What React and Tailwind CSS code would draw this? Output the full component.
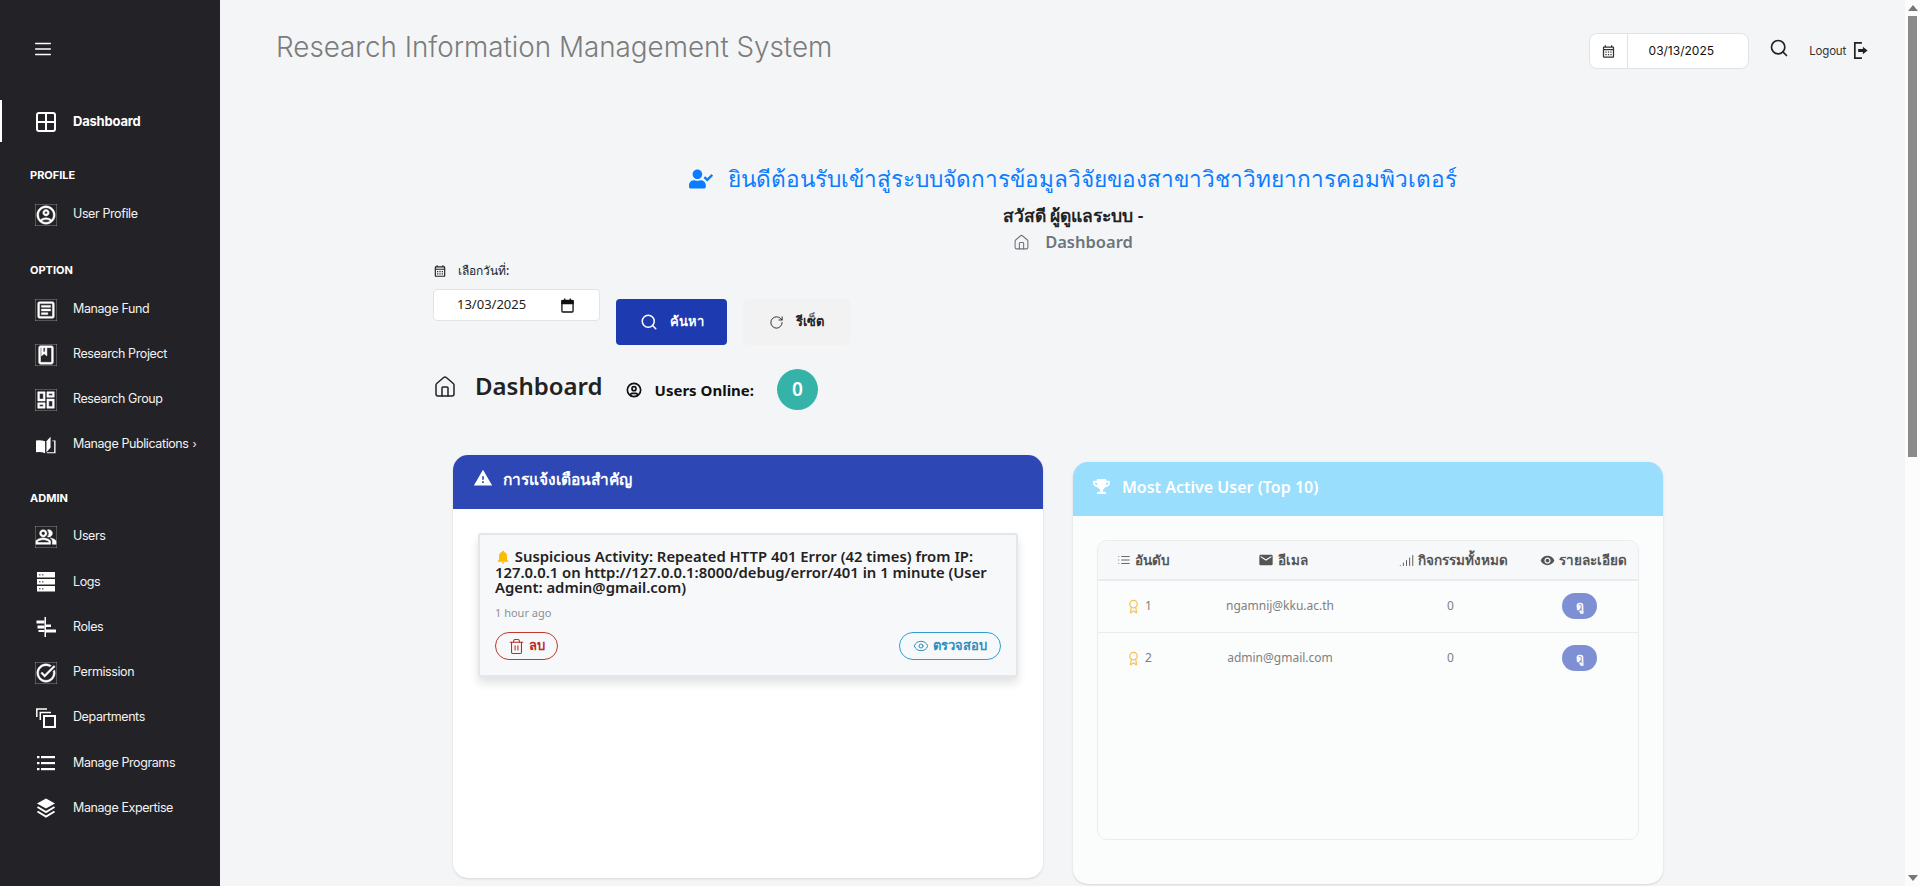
import {
  MdOutlineAccountCircle,
  MdOutlineArticle,
  MdOutlineBook,
  MdOutlineDashboard,
  MdOutlinePeopleAlt,
  MdOutlineTaskAlt,
  MdOutlineCalendarMonth,
  MdEmail,
  MdRemoveRedEye,
  MdNotifications,
  MdWarning,
} from 'react-icons/md'
import { FaTrophy, FaUserCheck } from 'react-icons/fa'
import { LuMenu, LuSearch, LuRotateCw, LuHouse, LuEye, LuTrash2, LuAward, LuList, LuSignal, LuCircleUser } from 'react-icons/lu'

const sans = "font-['Inter','Noto_Sans',sans-serif]"

// material icons sit heavier and larger in the picture
const thick = (Icon) => () => <Icon className="size-[22px] shrink-0 text-white [stroke-width:0.5px]" />

// Sidebar icons the packages don't have in this shape
const BookIcon = ({ className }) => (
  <svg viewBox="0 0 22 20" className={className} fill="currentColor">
    <path d="M0 5Q5 4 10 6V19Q5 17 0 18Z" />
    <path d="M11.5 6L16 1V13L11.5 18Z" />
    <path d="M18 5H21.5V19H12V18H20V6H18Z" />
  </svg>
)

const LogsIcon = ({ className }) => (
  <svg viewBox="0 0 20 20" className={className}>
    {[0, 7, 14].map((y) => (
      <g key={y}>
        <rect x="1" y={y} width="18" height="5.5" fill="currentColor" />
        <rect x="3" y={y + 2} width="1.5" height="1.5" fill="#777" />
        <rect x="6" y={y + 2} width="1.5" height="1.5" fill="#777" />
      </g>
    ))}
  </svg>
)

const RolesIcon = ({ className }) => (
  <svg viewBox="0 0 20 20" className={className} fill="currentColor">
    <rect x="8.5" y="0" width="1.5" height="20" />
    <rect x="0.5" y="3.5" width="8" height="3" />
    <rect x="1.5" y="8.5" width="7" height="3" />
    <rect x="2.5" y="13" width="6" height="2" />
    <rect x="10" y="7.5" width="5" height="2.5" />
    <rect x="10" y="12.5" width="10" height="3" />
  </svg>
)

const DepartmentsIcon = ({ className }) => (
  <svg viewBox="0 0 20 20" className={className} fill="none" stroke="currentColor">
    <path d="M0.8 9V1H11" strokeWidth="1.5" />
    <path d="M4.3 12V4.5H15" strokeWidth="1.5" />
    <rect x="8" y="8" width="11" height="11" strokeWidth="2" />
  </svg>
)

const ListIcon = ({ className }) => (
  <svg viewBox="0 0 20 20" className={className} fill="currentColor">
    {[3, 9, 15].map((y) => (
      <g key={y}>
        <rect x="1" y={y} width="2.5" height="2.2" />
        <rect x="5" y={y} width="14" height="2.2" />
      </g>
    ))}
  </svg>
)

const LayersIcon = ({ className }) => (
  <svg viewBox="0 0 20 20" className={className} fill="none" stroke="currentColor" strokeWidth="2">
    <path d="M10 0.5L19 5.5L10 10.5L1 5.5Z" fill="currentColor" stroke="none" />
    <path d="M1.5 9L10 14L18.5 9" />
    <path d="M1.5 13.5L10 18.5L18.5 13.5" />
  </svg>
)

const LogoutIcon = ({ className }) => (
  <svg viewBox="0 0 15 18" className={className} fill="none" stroke="currentColor" strokeWidth="1.8">
    <path d="M9 1H1.5V17H9" />
    <path d="M5 7.5H10V5L15 9L10 13V10.5H5Z" fill="currentColor" stroke="none" />
  </svg>
)

const DateIcon = ({ className }) => (
  <svg viewBox="0 0 14 16" className={className} fill="none" stroke="currentColor" strokeWidth="1.4">
    <rect x="1" y="2.5" width="12" height="12.5" rx="1" />
    <path d="M1 3H13V6H1Z" fill="currentColor" />
    <path d="M4 0.5V3M10 0.5V3" />
  </svg>
)

const option = [
  ['Manage Fund', thick(MdOutlineArticle)],
  ['Research Project', thick(MdOutlineBook)],
  ['Research Group', thick(MdOutlineDashboard)],
  ['Manage Publications', BookIcon, true],
]

const admin = [
  ['Users', thick(MdOutlinePeopleAlt)],
  ['Logs', LogsIcon],
  ['Roles', RolesIcon],
  ['Permission', thick(MdOutlineTaskAlt)],
  ['Departments', DepartmentsIcon],
  ['Manage Programs', ListIcon],
  ['Manage Expertise', LayersIcon],
]

const users = ['ngamnij@kku.ac.th', 'admin@gmail.com']

const ProfileIcon = thick(MdOutlineAccountCircle)

const NavItem = ({ label, Icon, more, rowClass = 'h-[45px]' }) => (
  <div className={`flex items-center pl-[36px] text-[12.5px] tracking-[-0.4px] text-[#f2f2f2] ${rowClass}`}>
    <div className="flex w-5 justify-center">
      <Icon className="size-5 shrink-0 text-white" />
    </div>
    <span className="ml-[17px]">{label}</span>
    {more && <span className="ml-1 text-[11px]">›</span>}
  </div>
)

const SectionLabel = ({ children, className }) => (
  <div className={`h-4 pl-[30px] text-[11px] leading-4 font-bold text-white ${className}`}>{children}</div>
)

const Sidebar = () => (
  <aside className={`flex h-full w-[220px] shrink-0 flex-col bg-[#232227] ${sans}`}>
    <div className="flex h-[100px] items-start pt-[38px] pl-[32px]">
      <LuMenu className="size-[22px] text-white" strokeWidth={1.5} />
    </div>
    <div className="flex h-[42px] items-center border-l-2 border-white pl-[34px] pt-[1px] text-[13px] font-bold tracking-[-0.2px] text-white">
      <svg viewBox="0 0 20 20" className="size-5" fill="none" stroke="currentColor" strokeWidth="2">
        <rect x="1" y="1" width="18" height="18" rx="2" />
        <path d="M10 1v18M1 10h18" />
      </svg>
      <span className="ml-[17px]">Dashboard</span>
    </div>
    <SectionLabel className="mt-[25px] mb-[9px]">PROFILE</SectionLabel>
    <NavItem label="User Profile" Icon={ProfileIcon} />
    <SectionLabel className="mt-[25px] mb-[9px]">OPTION</SectionLabel>
    {option.map(([label, Icon, more]) => (
      <NavItem key={label} label={label} Icon={Icon} more={more} />
    ))}
    <SectionLabel className="mt-[23px] mb-[8px]">ADMIN</SectionLabel>
    {admin.map(([label, Icon]) => (
      <NavItem key={label} label={label} Icon={Icon} rowClass="h-[45.3px]" />
    ))}
  </aside>
)

const Topbar = () => (
  <header className="flex h-[94px] items-start justify-between pl-[56px] pr-[37px]">
    <h1 className={`mt-[28px] text-[27.8px] leading-[38px] font-light text-[#7c7c7c] ${sans}`}>
      Research Information Management System
    </h1>
    <div className="mt-[33px] flex items-start">
      <div className="flex h-[36px] w-[160px] items-center rounded-lg border border-[#dfe2e6] bg-white">
        <div className="flex h-full w-[38px] items-center justify-center border-r border-[#dfe2e6]">
          <MdOutlineCalendarMonth className="size-[15px] text-[#333]" />
        </div>
        <span className={`flex-1 pr-[14px] text-center text-[12px] text-[#111] ${sans}`}>03/13/2025</span>
      </div>
      <LuSearch className="mt-[5px] ml-[20px] size-[20px] text-[#222]" />
      <span className={`mt-[10px] ml-[20px] text-[11.5px] tracking-[-0.2px] text-[#333] ${sans}`}>Logout</span>
      <LogoutIcon className="mt-[9px] ml-[7px] h-[17px] w-[15px] text-[#222]" />
    </div>
  </header>
)

const AlertsCard = () => (
  <section className="h-[423px] w-[590px] overflow-hidden rounded-[15px] bg-white shadow-sm">
    <div className="flex h-[54px] items-start bg-[#2d47b5] pt-[13px] pl-5 text-white">
      <MdWarning className="size-[20px]" />
      <span className="ml-[10px] text-[15.5px] font-semibold">การแจ้งเตือนสำคัญ</span>
    </div>
    <div className="px-[25px] pt-[24px]">
      <div className="h-[144px] rounded-[3px] border-2 border-[#e3e6ea] bg-[#f7f8fa] px-[15px] pt-[14px] shadow-[0_6px_10px_rgba(0,0,0,0.12)]">
        <p className="text-[14.85px] leading-[15px] font-semibold text-[#222]">
          <MdNotifications className="inline size-[16px] align-[-3px] text-[#fbbc05]" /> Suspicious Activity: Repeated HTTP 401 Error (42 times) from IP: 127.0.0.1 on http://127.0.0.1:8000/debug/error/401 in 1 minute (User Agent: admin@gmail.com)
        </p>
        <p className="mt-[10px] text-[11px] leading-[15px] text-[#8b9096]">1 hour ago</p>
        <div className="mt-[12px] flex justify-between">
          <button className="flex h-[28px] w-[63px] items-center justify-center gap-1 rounded-full border border-[#c0392b] text-[13px] font-semibold text-[#b92c28]">
            <LuTrash2 className="size-[17px]" strokeWidth={1.5} />
            ลบ
          </button>
          <button className="flex h-[28px] w-[102px] items-center justify-center gap-1 rounded-full border border-[#2f9fd0] text-[13px] font-semibold text-[#2f8fbd]">
            <LuEye className="size-[16px]" strokeWidth={1.5} />
            ตรวจสอบ
          </button>
        </div>
      </div>
    </div>
  </section>
)

const ActiveUsersCard = () => (
  <section className="mt-[7px] h-[422px] w-[590px] overflow-hidden rounded-[15px] bg-[#fbfcfc] shadow-sm">
    <div className="flex h-[54px] items-start bg-[#99defc] pt-[13px] pl-5 text-white">
      <FaTrophy className="mt-[3px] size-[17px]" />
      <span className="ml-[12px] text-[16px] font-semibold">Most Active User (Top 10)</span>
    </div>
    <div className="px-[24px] pt-[24px]">
      <div className="h-[300px] overflow-hidden rounded-[10px] border border-[#e9ecef]">
        <div className="grid h-[40px] grid-cols-[90px_190px_150px_1fr] items-center border-b-2 border-[#e9ecef] bg-[#f7f8f9] text-center text-[13.5px] font-semibold text-[#555]">
          <span className="flex items-center justify-center gap-1"><LuList className="size-[14px]" strokeWidth={1.5} />อันดับ</span>
          <span className="flex items-center justify-center gap-1"><MdEmail className="size-[16px]" />อีเมล</span>
          <span className="flex items-center justify-center gap-1"><LuSignal className="size-[15px]" strokeWidth={1.5} />กิจกรรมทั้งหมด</span>
          <span className="flex items-center justify-center gap-1"><MdRemoveRedEye className="size-[15px]" />รายละเอียด</span>
        </div>
        {users.map((email, i) => (
          <div key={email} className="grid h-[51.5px] grid-cols-[82px_200px_141px_117px] items-center border-b border-[#e9ecef] text-center text-[12px] text-[#808080] last:border-b-0">
            <span className="flex items-center justify-center gap-1">
              <LuAward className="size-[15px] text-[#f6c35b]" />
              {i + 1}
            </span>
            <span>{email}</span>
            <span>0</span>
            <span className="flex justify-center">
              <button className="h-[26px] w-[35px] rounded-full bg-[#7e8fd3] text-[12px] font-semibold text-white">ดู</button>
            </span>
          </div>
        ))}
      </div>
    </div>
  </section>
)

const Main = () => (
  <main className="h-full min-w-0 flex-1 overflow-hidden bg-[#f4f5f7] font-['Noto_Sans',sans-serif]">
    <Topbar />
    <div className="ml-[213px] w-[1280px]">
      <div className="mt-[69px] flex items-center justify-center text-[#0a7cff]">
        <FaUserCheck className="size-[24px]" />
        <h2 className="ml-[15px] text-[22.6px] leading-[32px] font-medium">ยินดีต้อนรับเข้าสู่ระบบจัดการข้อมูลวิจัยของสาขาวิชาวิทยาการคอมพิวเตอร์</h2>
      </div>
      <p className="mt-[7px] text-center text-[17.5px] leading-[26px] font-semibold text-[#222]">สวัสดี ผู้ดูแลระบบ -</p>
      <div className="mt-[2px] flex items-center justify-center text-[#6c757d]">
        <LuHouse className="size-[17px]" strokeWidth={1.5} />
        <span className="ml-[15px] text-[16.5px] leading-[24px] font-semibold">Dashboard</span>
      </div>

      <div className="mt-[8px] flex items-start">
        <div>
          <div className="flex items-center text-[12px] font-medium text-[#222]">
            <MdOutlineCalendarMonth className="size-[14px]" />
            <span className="ml-[11px] leading-[17px]">เลือกวันที่:</span>
          </div>
          <div className="mt-[10px] flex h-[32px] w-[167px] items-center rounded-[4px] border border-[#e1e3e6] bg-white pl-[23px] text-[13px] text-[#222]">
            <span>13/03/2025</span>
            <DateIcon className="ml-[35px] h-[15px] w-[13px] text-[#111]" />
          </div>
        </div>
        <button className="mt-[37px] ml-[16px] flex h-[46px] w-[111px] items-center justify-center gap-3 rounded-[4px] bg-[#1e3ab0] text-[13px] font-semibold text-white">
          <LuSearch className="size-[18px]" />
          ค้นหา
        </button>
        <button className="mt-[37px] ml-[16px] flex h-[46px] w-[107px] items-center justify-center gap-3 rounded-[4px] bg-[#f2f2f2] text-[13px] font-semibold text-[#222]">
          <LuRotateCw className="size-[15px]" strokeWidth={1.5} />
          รีเซ็ต
        </button>
      </div>

      <div className="mt-[23px] flex h-[42px] items-center">
        <LuHouse className="mt-[-5px] size-[24px] text-[#222]" strokeWidth={1.5} />
        <span className="mt-[-6px] ml-[18px] text-[24px] font-semibold text-[#222]">Dashboard</span>
        <LuCircleUser className="mt-[2px] ml-[23px] size-[16px] text-[#111]" strokeWidth={2.5} />
        <span className="mt-[2px] ml-[13px] text-[15px] font-bold text-[#111]">Users Online:</span>
        <span className="ml-[23px] flex size-[41px] items-center justify-center rounded-full bg-[#36b3a8] text-[19px] font-semibold text-white">0</span>
      </div>

      <div className="mt-[45px] ml-[20px] flex items-start gap-[30px]">
        <AlertsCard />
        <ActiveUsersCard />
      </div>
    </div>
  </main>
)

// browser scrollbar in the picture
const Scrollbar = () => (
  <div className="flex h-full w-[15px] shrink-0 flex-col items-center bg-[#fcfcfc]">
    <div className="mt-[5px] size-0 border-x-[5px] border-b-[6px] border-x-transparent border-b-[#777]" />
    <div className="mt-[5px] h-[441px] w-[9px] bg-[#8a8a8a]" />
    <div className="mt-auto mb-[5px] size-0 border-x-[5px] border-t-[6px] border-x-transparent border-t-[#777]" />
  </div>
)

const App = () => (
  <div className="flex h-screen w-full overflow-hidden">
    <Sidebar />
    <Main />
    <Scrollbar />
  </div>
)

export default App
